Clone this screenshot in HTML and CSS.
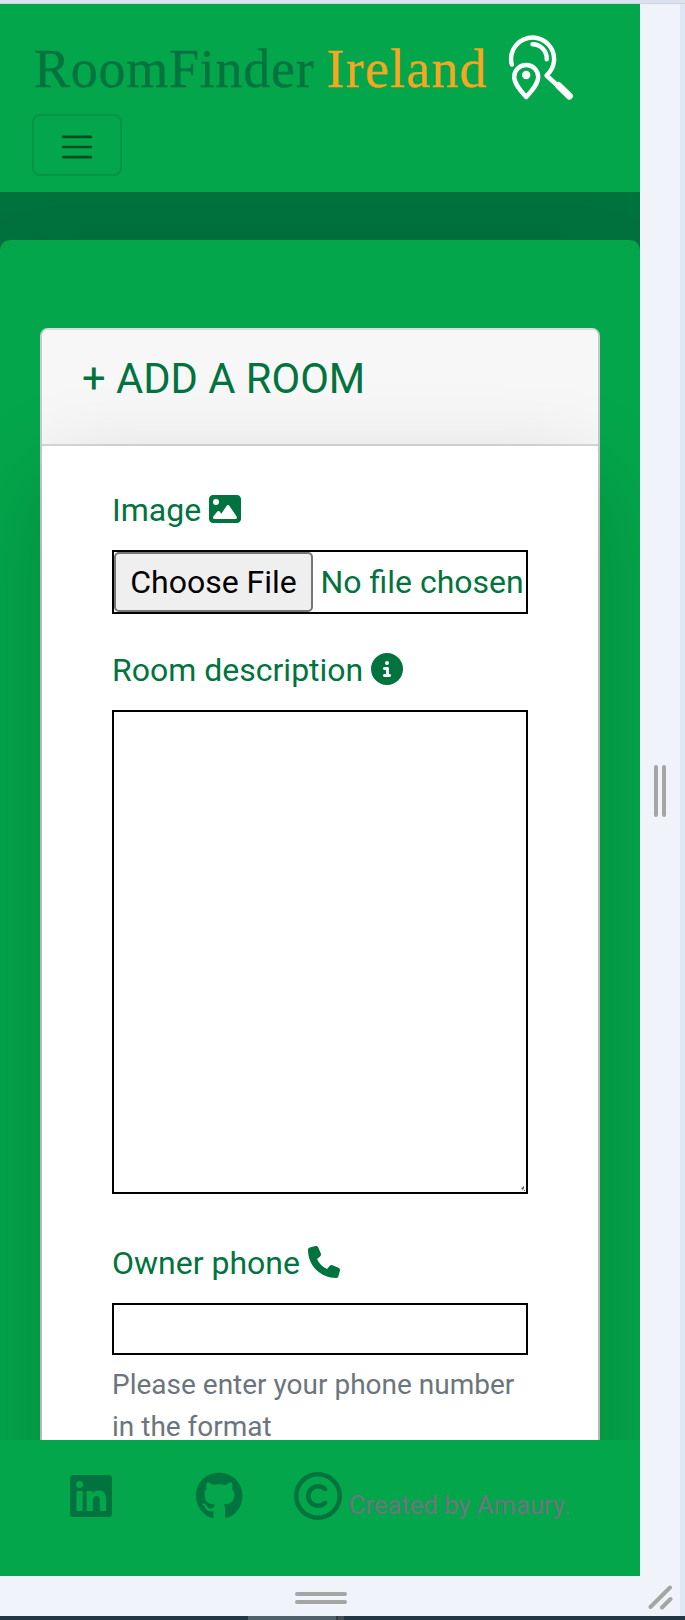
FILE: index.html
```html
<!DOCTYPE html>
<html lang="en">
<head>
<meta charset="utf-8">
<title>RoomFinder Ireland</title>
<link rel="stylesheet" href="styles.css">
</head>
<body>
<div class="stage">
  <div class="device">
    <div class="viewport">
      <header class="navbar">
        <a class="brand"><span class="brand-name">RoomFinder <span class="brand-accent">Ireland</span></span><svg class="brand-icon" viewBox="0 0 68 68" fill="none" stroke="#fff" stroke-width="4.400" stroke-linecap="round" stroke-linejoin="round"><path d="M3.800 30.500A21.500 21.500 0 1 1 39.500 40.500"/><path d="M24.500 10.300A14.200 14.200 0 0 1 38.700 25.300"/><path d="M18.200 63C11 55 6.200 49 6.200 43a12 12 0 0 1 24 0C30.200 49 25.500 55 18.200 63z"/><circle cx="18.200" cy="41" r="4.200" fill="#fff" stroke="none"/><path d="M38.500 41.500L49 51"/><path d="M50.500 51.500L61.300 62" stroke-width="7"/></svg></a>
        <button class="toggler" aria-label="Menu"><svg viewBox="0 0 30 30"><path stroke="rgba(0,0,0,.55)" stroke-linecap="round" stroke-miterlimit="10" stroke-width="2" d="M4 7h22M4 15h22M4 23h22"/></svg></button>
      </header>
      <main class="content">
        <section class="card">
          <div class="card-header"><h1 class="title">+ ADD A ROOM</h1></div>
          <form class="card-body">
            <label class="label">Image <svg class="icon" viewBox="0 0 512 512"><path fill-rule="evenodd" d="M0 96C0 60.700 28.700 32 64 32H448c35.300 0 64 28.700 64 64V416c0 35.300-28.700 64-64 64H64c-35.300 0-64-28.700-64-64V96zM323.800 202.500c-4.500-6.600-11.900-10.500-19.800-10.500s-15.400 3.900-19.800 10.500l-87 127.600L170.700 297c-4.600-5.700-11.500-9-18.700-9s-14.200 3.300-18.700 9l-64 80c-5.800 7.200-6.900 17.100-2.900 25.400s12.400 13.600 21.600 13.600H424c8.900 0 17.100-4.900 21.200-12.800s3.600-17.400-1.400-24.700l-120-176zM112 192a48 48 0 1 0 0-96 48 48 0 1 0 0 96z"/></svg></label>
            <div class="file"><span class="file-button">Choose File</span><span class="file-name">No file chosen</span></div>
            <label class="label">Room description <svg class="icon" viewBox="0 0 512 512"><path fill-rule="evenodd" d="M256 512A256 256 0 1 0 256 0a256 256 0 1 0 0 512zM216 336h24V272H216c-13.300 0-24-10.700-24-24s10.700-24 24-24h48c13.300 0 24 10.700 24 24v88h8c13.300 0 24 10.700 24 24s-10.700 24-24 24H216c-13.300 0-24-10.700-24-24s10.700-24 24-24zm40-208a32 32 0 1 1 0 64 32 32 0 1 1 0-64z"/></svg></label>
            <div class="textarea"><svg class="grip" viewBox="0 0 6 6"><path d="M1.500 1.500h2v2h-2zM3 0.500h1v2h-1zM4 4h1v1h-1z" fill="#555"/></svg></div>
            <label class="label">Owner phone <svg class="icon" viewBox="0 0 512 512"><path d="M164.900 24.600c-7.700-18.600-28-28.500-47.400-23.200l-88 24C12.100 30.200 0 46 0 64C0 311.400 200.600 512 448 512c18 0 33.800-12.100 38.600-29.500l24-88c5.300-19.400-4.600-39.700-23.200-47.400l-96-40c-16.300-6.800-35.200-2.100-46.300 11.600L304.700 368C234.300 334.700 177.300 277.700 144 207.300L193.300 167c13.700-11.200 18.400-30 11.600-46.300l-40-96z"/></svg></label>
            <input class="input" type="tel">
            <p class="hint">Please enter your phone number in the format</p>
          </form>
        </section>
      </main>
      <footer class="footer">
        <svg class="linkedin" viewBox="0 32 448 448"><path d="M416 32H31.900C14.300 32 0 46.500 0 64.300v383.400C0 465.500 14.300 480 31.900 480H416c17.600 0 32-14.500 32-32.300V64.300c0-17.800-14.400-32.300-32-32.300zM135.400 416H69V202.200h66.500V416zm-33.200-243c-21.300 0-38.500-17.300-38.500-38.500S80.900 96 102.200 96c21.200 0 38.500 17.300 38.500 38.500 0 21.300-17.200 38.500-38.500 38.500zm282.100 243h-66.400V312c0-24.800-.5-56.700-34.500-56.700-34.600 0-39.900 27-39.900 54.900V416h-66.400V202.200h63.700v29.200h.9c8.900-16.800 30.600-34.500 62.900-34.500 67.200 0 79.700 44.300 79.700 101.900V416z"/></svg>
        <svg class="github" viewBox="0 0 496 512"><path d="M244.800 8C106.100 8 0 113.300 0 252c0 110.900 69.800 205.800 169.500 239.200 12.800 2.300 17.300-5.600 17.300-12.100 0-6.200-.3-40.400-.3-61.400 0 0-70 15-84.700-29.800 0 0-11.400-29.100-27.800-36.600 0 0-22.900-15.700 1.600-15.400 0 0 24.900 2 38.600 25.800 21.900 38.600 58.600 27.500 72.900 20.900 2.300-16 8.800-27.100 16-33.700-55.900-6.200-112.300-14.300-112.300-110.500 0-27.500 7.600-41.300 23.600-58.900-2.600-6.500-11.100-33.300 2.600-67.900 20.900-6.500 69 27 69 27 20-5.600 41.500-8.500 62.800-8.500s42.800 2.900 62.800 8.500c0 0 48.100-33.600 69-27 13.700 34.700 5.200 61.400 2.600 67.900 16 17.700 25.800 31.500 25.800 58.900 0 96.500-58.900 104.200-114.800 110.500 9.200 7.900 17 22.900 17 46.400 0 33.700-.3 75.400-.3 83.600 0 6.500 4.600 14.400 17.300 12.100C428.200 457.800 496 362.900 496 252 496 113.300 383.500 8 244.800 8z"/></svg>
        <svg class="copyright" viewBox="0 0 48 48" fill="none" stroke-width="4.500" stroke-linecap="round"><circle cx="24" cy="24" r="21.750"/><path d="M31.100 17.200A9.800 9.800 0 1 0 31.100 30.800"/></svg>
        <span class="credit">Created by Amaury.</span>
      </footer>
    </div>
    <div class="rail-right"><svg class="grab-v" viewBox="0 0 12 52"><path d="M2 2V50M10 2V50"/></svg></div>
    <div class="rail-bottom"><svg class="grab-h" viewBox="0 0 52 12"><path d="M2 2H50M2 10H50"/></svg></div>
    <div class="corner"><svg class="grab-c" viewBox="0 0 25 25"><path d="M2.500 22L22 2.500M14 22.500L22.500 14"/></svg></div>
  </div>
  <div class="taskbar"><span class="task"></span><span class="task-edge"></span></div>
</div>
</body>
</html>
```
FILE: styles.css
```css
* { box-sizing: border-box; }
body { margin: 0; background: #dfe6f4; font-family: Roboto, "Liberation Sans", sans-serif; }
svg { display: block; }
.stage { height: 1620px; padding-top: 4px; display: flex; flex-direction: column; overflow: hidden; background: linear-gradient(#dae2ee 0 3px, #d0d3df 3px 4px, #dfe6f4 4px); }
.device { width: 680px; height: 1612px; display: grid; grid-template: 1572px 40px / 640px 40px; background: #f0f3f9; }
.viewport { display: flex; flex-direction: column; overflow: hidden; background: #01733e; color: #01733e; }

.navbar { flex: none; height: 188px; background: #04a64b; padding: 28px 32px 0; display: flex; flex-direction: column; align-items: flex-start; position: relative; z-index: 1; }
.brand { display: flex; height: 82px; }
.brand-name { width: 456px; margin: 7px 0 0 2px; font: 54px/60px "Liberation Serif", serif; letter-spacing: .75px; word-spacing: -2px; white-space: pre; color: #01733e; -webkit-text-stroke: .3px currentColor; }
.brand-accent { color: #f5a623; letter-spacing: 1.200px; }
.brand-icon { width: 68px; height: 68px; margin: 2px 0 0 18px; }
.toggler { width: 90px; height: 62px; margin-top: 0; padding: 0; background: none; border: 2px solid rgba(0, 0, 0, .1); border-radius: 8px; display: grid; place-items: center; }
.toggler svg { width: 38px; height: 40px; margin-top: 3px; }

.content { flex: none; height: 1200px; margin-top: 48px; padding: 88px 40px 0; background: #04a64b; border-radius: 10px 10px 0 0; box-shadow: 0 32px 96px rgba(0, 0, 0, .175); overflow: clip; }
.card { height: 1400px; border: 2px solid #c8cac9; border-top-color: #dcdcdc; border-radius: 8px; background: #fff; }
.card-header { height: 116px; padding: 24px 40px 0; background: #f7f7f7; border-bottom: 2px solid rgba(0, 0, 0, .125); border-radius: 6px 6px 0 0; }
.title { margin: 0; font-size: 41.700px; line-height: 49px; font-weight: 400; white-space: nowrap; }
.card-body { height: 1280px; padding: 40px 70px 0; background: #fff; border-radius: 8px; box-shadow: 0 32px 96px rgba(0, 0, 0, .175); display: flex; flex-direction: column; }
.label { display: flex; align-items: center; gap: 8px; height: 48px; margin-bottom: 16px; font-size: 32px; line-height: 48px; white-space: nowrap; }
.icon { width: 32px; height: 32px; fill: #01733e; margin-top: -2px; }
.file { height: 64px; margin-bottom: 32px; border: 2px solid #000; display: flex; font-size: 32px; line-height: 60px; white-space: nowrap; }
.file-button { width: 199px; height: 60px; border: 2px solid #767676; border-radius: 5px; background: #efefef; color: #000; text-align: center; line-height: 56px; }
.file-name { margin-left: 7.500px; }
.textarea { flex: none; height: 484px; margin-bottom: 45px; border: 2px solid #000; display: flex; align-items: flex-end; justify-content: flex-end; }
.grip { width: 6px; height: 6px; }
.input { height: 52px; margin: 0; padding: 0; border: 2px solid #000; background: #fff; border-radius: 0; }
.hint { margin: 9px 0 0; color: #6c757d; font-size: 28px; line-height: 42px; }

.footer { flex: none; height: 136px; background: #04a64b; display: flex; align-items: flex-start; padding-left: 70px; position: relative; z-index: 1; fill: #01733e; }
.linkedin { width: 42px; height: 42px; margin-top: 35px; }
.github { width: 46.500px; height: 48px; margin: 32px 0 0 84px; }
.copyright { width: 48px; height: 48px; margin: 32px 0 0 51.500px; fill: none; stroke: #01733e; }
.credit { margin: 46px 0 0 6.600px; font-size: 25.600px; line-height: 38px; font-weight: 400; color: #6c757d; white-space: nowrap; }

.rail-right, .rail-bottom, .corner { display: grid; place-items: center; fill: none; stroke: #a5a5a5; stroke-width: 4; stroke-linecap: round; }
.grab-v { width: 12px; height: 52px; margin-top: 2px; }
.grab-h { width: 52px; height: 12px; margin: 4px 0 0 2px; }
.grab-c { width: 25px; height: 25px; margin-top: 2px; }
.taskbar { height: 4px; display: flex; background: #223743; }
.task { width: 88px; margin-left: 248px; background: #51616b; }
.task-edge { width: 8px; background: #454c52; border-left: 2px solid #333b42; }
```
